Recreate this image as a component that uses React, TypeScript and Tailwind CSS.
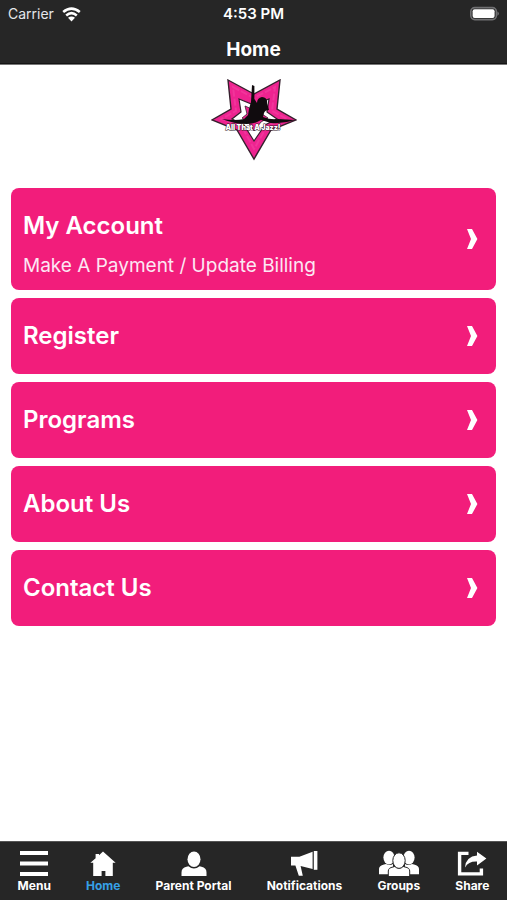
import type { ReactNode } from "react";

type MenuItem = {
  title: string;
  subtitle?: string;
};

type Tab = {
  label: string;
  icon: ReactNode;
  active?: boolean;
};

const menuItems: MenuItem[] = [
  { title: "My Account", subtitle: "Make A Payment / Update Billing" },
  { title: "Register" },
  { title: "Programs" },
  { title: "About Us" },
  { title: "Contact Us" },
];

const tabs: Tab[] = [
  {
    label: "Menu",
    icon: (
      <svg width="30" height="26" viewBox="0 0 30 26" fill="currentColor">
        <rect x="1" y="1" width="28" height="4" />
        <rect x="1" y="11.5" width="28" height="4" />
        <rect x="1" y="22" width="28" height="4" />
      </svg>
    ),
  },
  {
    label: "Home",
    active: true,
    icon: (
      <svg width="26" height="26" viewBox="0 0 26 26" fill="currentColor">
        <path d="M13 1.6 25.6 12.8H22.8V26H15.4V21H11.6V26H3.2V12.8H.4L5.6 8.2V4H9V5.2Z" />
      </svg>
    ),
  },
  {
    label: "Parent Portal",
    icon: (
      <svg width="26" height="26" viewBox="0 0 26 26" fill="currentColor">
        <ellipse cx="13" cy="9.2" rx="6.5" ry="7.8" />
        <path d="M.5 26V22.4Q.5 17.8 5.5 16.8L7.4 16.3Q13 20.9 18.6 16.3L20.5 16.8Q25.5 17.8 25.5 22.4V26Z" />
      </svg>
    ),
  },
  {
    label: "Notifications",
    icon: (
      <svg width="28" height="26" viewBox="0 0 28 26" fill="currentColor">
        <path d="M1 6.8H9.4L22.6 1.8V19L10.6 16 12.8 25.8H8.8L5.4 15.6H1Z" />
        <rect x="23.8" y="1" width="3.6" height="18.8" />
      </svg>
    ),
  },
  {
    label: "Groups",
    icon: (
      <svg width="42" height="26" viewBox="0 0 42 26" fill="currentColor">
        <ellipse cx="11" cy="7.6" rx="5.6" ry="6.8" />
        <ellipse cx="31" cy="7.6" rx="5.6" ry="6.8" />
        <path d="M1 24.2V19Q1 15.4 6 14.4L8 14Q12 16 15 14V24.2ZM41 24.2V19Q41 15.4 36 14.4L34 14Q30 16 27 14V24.2Z" />
        <g stroke="#262626" strokeWidth="1">
          <path d="M10.3 26.6V21Q10.3 17.8 15 17L17 16.4Q21 19.8 25 16.4L27 17Q31.7 17.8 31.7 21V26.6Z" />
          <ellipse cx="21" cy="10.6" rx="6.2" ry="7.8" />
        </g>
      </svg>
    ),
  },
  {
    label: "Share",
    icon: (
      <svg width="30" height="26" viewBox="0 0 30 26" fill="currentColor">
        <path
          d="M11.5 3.4H2.6V23.9H24.4V18.6"
          fill="none"
          stroke="currentColor"
          strokeWidth="3.4"
        />
        <path d="M20 1.8 29.4 8.5 20 15.5V11.6Q11.5 11.2 8 17.4Q9 6.6 20 5.6Z" />
      </svg>
    ),
  },
];

function StatusBar() {
  return (
    <div className="grid grid-cols-3 items-center h-7 px-2">
      <div className="flex items-center gap-2 text-sm text-gray-200">
        Carrier
        <svg width="19" height="15" viewBox="0 0 19 15" fill="none">
          <path
            d="M1.2 5Q9.5-1.8 17.8 5M4.2 8.4Q9.5 4 14.8 8.4"
            stroke="white"
            strokeWidth="2.6"
          />
          <path d="M6 10.8Q9.5 8 13 10.8L9.5 14.4Z" fill="white" />
        </svg>
      </div>
      <div className="text-center text-[15px] font-semibold">4:53 PM</div>
      <div className="flex justify-end">
        <svg width="30" height="16" viewBox="0 0 30 16">
          <rect
            x="1.8"
            y="1.6"
            width="25.6"
            height="12"
            rx="4"
            fill="none"
            stroke="#707072"
            strokeWidth="1.6"
          />
          <rect x="3.6" y="3.2" width="22" height="8.8" rx="2" fill="white" />
          <path d="M28.4 5.4Q30 6.4 30 7.6T28.4 9.8Z" fill="#707072" />
        </svg>
      </div>
    </div>
  );
}

function Logo() {
  return (
    <svg
      width="86"
      height="82"
      viewBox="0 0 86 82"
      role="img"
      aria-label="All That A Jazz!"
    >
      <path
        d="M17 1 43 15 69 1 66 30 85 41 60 51 43 80 26 51 1 41 20 30Z"
        fill="#ee2390"
        stroke="#35202d"
        strokeWidth="1.4"
      />
      <path
        d="M22 8 43 19 64 8 61 32 76 40 57 46 43 70 30 46 10 40 25 32Z"
        fill="none"
        stroke="#f0359a"
        strokeWidth="2"
        strokeDasharray="7 2"
      />
      <path
        d="M28 20 43 26 58 20 56 33 66 40 54 46 43 62 33 46 21 40 30 33Z"
        fill="white"
        stroke="#35202d"
        strokeWidth="1.2"
      />
      <path
        d="M34 27 43 31 52 27 51 35 57 39 50 43 43 52 37 43 31 39 36 35Z"
        fill="#ee2390"
        stroke="#35202d"
        strokeWidth=".8"
      />
      <path
        d="M41 6 43.4 7 43.4 20 46 24Q46 19 51 18Q57 19 56 24L58 31Q54 31 53 34L52 38Q60 41 67 40L84 41Q72 45 60 44L50 41Q44 45 36 45Q23 45 11 40Q24 42 33 40L37 36 38 30 40 23Z"
        fill="#100b0e"
      />
      <text
        x="42"
        y="51"
        textAnchor="middle"
        fontSize="7"
        fontWeight="900"
        fill="white"
        stroke="#35202d"
        strokeWidth="1"
        paintOrder="stroke"
      >
        All That A Jazz!
      </text>
    </svg>
  );
}

function MenuCard({ title, subtitle }: MenuItem) {
  return (
    <button className="flex items-center justify-between w-full px-3 rounded-lg bg-[#f21d7b] text-left text-white">
      <span className={subtitle ? "pt-[22px] pb-3" : "py-[22px]"}>
        <span className="block text-2xl font-semibold">{title}</span>
        {subtitle && (
          <span className="block pt-3 text-[19px] leading-6 text-pink-100">{subtitle}</span>
        )}
      </span>
      <svg width="24" height="22" viewBox="0 0 24 22" fill="white">
        <path d="M7 1H12L17.4 11 12 21H7L11 11Z" />
      </svg>
    </button>
  );
}

function TabBar() {
  return (
    <nav className="flex justify-around pt-2 pb-1 h-[59px] bg-[#262626] border-t border-[#555]">
      {tabs.map((tab) => (
        <button key={tab.label} className="flex flex-col items-center gap-1 text-white">
          {tab.icon}
          <span
            className={
              tab.active
                ? "text-xs leading-3 font-bold text-[#36a0e6]"
                : "text-xs leading-3 font-bold"
            }
          >
            {tab.label}
          </span>
        </button>
      ))}
    </nav>
  );
}

function App() {
  return (
    <div className="flex flex-col min-h-screen bg-white font-['Inter',sans-serif]">
      <header className="bg-[#262626] text-white border-b border-[#777]">
        <StatusBar />
        <h1 className="pt-2 text-center text-[19px] leading-[27px] font-bold border-b border-[#151515]">
          Home
        </h1>
      </header>
      <main className="flex-1 px-[11px]">
        <div className="flex justify-center pt-3.5 pb-[27px]">
          <Logo />
        </div>
        <div className="flex flex-col gap-2">
          {menuItems.map((item) => (
            <MenuCard key={item.title} {...item} />
          ))}
        </div>
      </main>
      <TabBar />
    </div>
  );
}

export default App;
